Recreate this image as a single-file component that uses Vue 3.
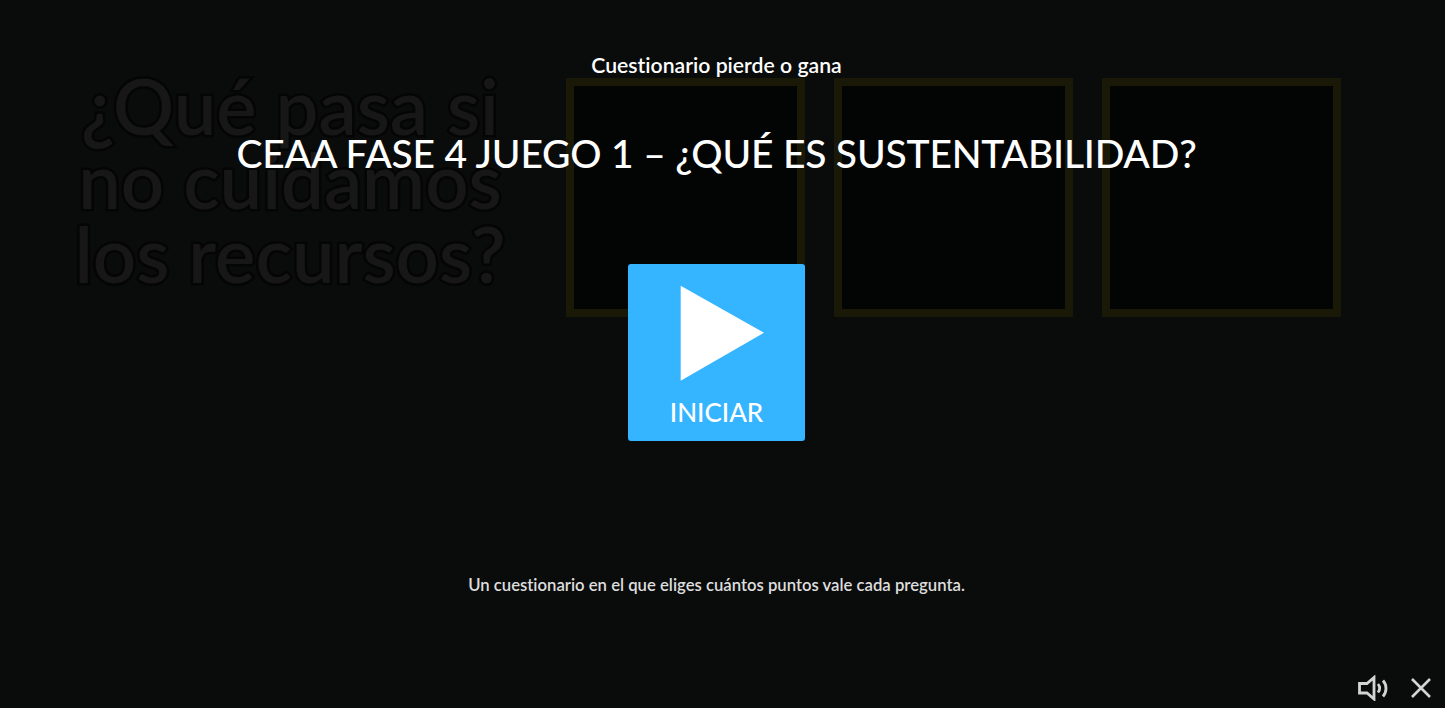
<script setup>
const questionLines = ['¿Qué pasa si', 'no cuidamos', 'los recursos?']
const slots = [1, 2, 3]
</script>

<template>
  <div class="screen">
    <div class="board">
      <div class="question">
        <div v-for="line in questionLines" :key="line" class="question-line">{{ line }}</div>
      </div>
      <div class="slots">
        <div v-for="slot in slots" :key="slot" class="slot"></div>
      </div>
    </div>

    <div class="overlay">
      <div class="kind">Cuestionario pierde o gana</div>
      <h1 class="title">CEAA FASE 4 JUEGO 1 – ¿QUÉ ES SUSTENTABILIDAD?</h1>
      <button class="start" type="button">
        <svg class="play" width="84" height="96" viewBox="0 0 84 96">
          <path d="M0.7 0.7 L84 47.7 L0.7 95.7 Z" fill="#fff" />
        </svg>
        <span class="start-label">INICIAR</span>
      </button>
      <p class="description">Un cuestionario en el que eliges cuántos puntos vale cada pregunta.</p>
      <div class="controls">
        <svg width="32" height="26" viewBox="0 0 32 26" fill="none" stroke="#d4d4d4" stroke-width="2.8">
          <path d="M1.5 8.5 H9 L16 2.5 V24 L9 18 H1.5 Z" stroke-linejoin="miter" />
          <path d="M20 9 C22 11.5 22 15 20 17.5" />
          <path d="M25 5.5 C29 10 29 17 25 21.5" />
        </svg>
        <svg width="22" height="22" viewBox="0 0 22 22" fill="none" stroke="#d4d4d4" stroke-width="2.6">
          <path d="M2 2 L20 20 M20 2 L2 20" />
        </svg>
      </div>
    </div>
  </div>
</template>

<style scoped>
.screen {
  position: relative;
  width: 1445px;
  height: 708px;
  overflow: hidden;
  background: #0a0c0c;
  font-family: "Lato", "Open Sans", sans-serif;
  font-variant-ligatures: none;
  color: #fff;
}
.board {
  display: flex;
  align-items: flex-start;
  padding: 69px 104px 0 70px;
  justify-content: space-between;
}
.question {
  width: 440px;
  text-align: center;
  font-size: 76px;
  line-height: 74px;
  font-weight: 600;
  color: #171717;
  -webkit-text-stroke: 5px #050505;
  paint-order: stroke fill;
}
.question-line {
  white-space: nowrap;
}
.slots {
  display: flex;
  gap: 29px;
  margin-top: 9px;
}
.slot {
  width: 239px;
  height: 239px;
  box-sizing: border-box;
  border: 8px solid #1a1806;
  background: #030404;
}
.overlay {
  position: absolute;
  inset: 0;
  display: flex;
  flex-direction: column;
  align-items: center;
  padding: 51px 12px 0 0;
  box-sizing: border-box;
}
.kind {
  font-size: 21.2px;
  line-height: 28px;
  font-weight: 600;
}
.title {
  margin: 48px 0 0;
  font-size: 39px;
  line-height: 52px;
  font-weight: 500;
  white-space: nowrap;
  letter-spacing: -0.2px;
}
.start {
  margin-top: 85px;
  width: 177px;
  height: 177px;
  border: 0;
  border-radius: 3px;
  padding: 21px 0 0;
  background: #35b4ff;
  color: #fff;
  font-family: inherit;
  display: flex;
  flex-direction: column;
  align-items: center;
}
.play {
  margin-left: 11px;
}
.start-label {
  margin-top: 14px;
  font-size: 26px;
  line-height: 34px;
  font-weight: 500;
}
.description {
  margin: 133px 0 0;
  font-size: 16.7px;
  line-height: 22px;
  font-weight: 600;
  color: #dedede;
}
.controls {
  margin: auto -12px 0 0;
  align-self: flex-end;
  display: flex;
  align-items: center;
  gap: 20px;
  padding: 0 13px 7px 0;
}
</style>
